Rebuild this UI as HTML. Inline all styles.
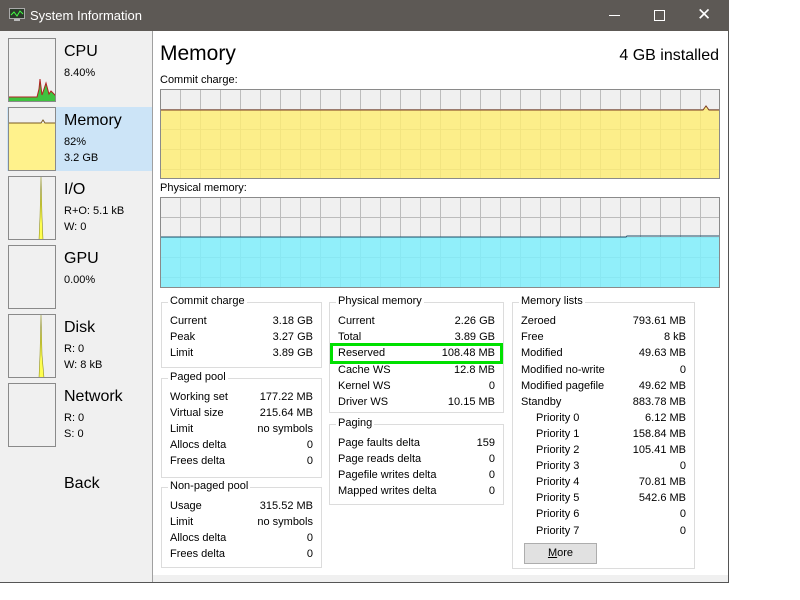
<!DOCTYPE html><html><head><style>
*{margin:0;padding:0;box-sizing:border-box}
body{width:800px;height:600px;background:#fff;position:relative;font-family:"Liberation Sans",sans-serif;color:#000;overflow:hidden}
.a{position:absolute}
#win{left:0;top:0;width:729px;height:583px;border:1px solid #555;border-top:none;background:#f0f0f0}
#title{left:0;top:0;width:729px;height:31px;background:#5d5955;color:#fff;font-size:12px}
#side{left:0;top:31px;width:153px;height:551px;background:#f0f0f0;border-right:1px solid #a0a0a0}
#main{left:153px;top:31px;width:575px;height:544px;background:#fff}
.th{position:absolute;left:8px;width:48px;height:64px;border:1px solid #8a8a8a;background:#f0f0f0;overflow:hidden}
.nm{position:absolute;left:64px;font-size:16px}
.sb{position:absolute;left:64px;font-size:11px;line-height:16px}
.chart{position:absolute;left:160px;width:560px;border:1px solid #8a8a8a;overflow:hidden;
background-color:#f0f0f0;background-image:linear-gradient(#bcbcbc 1px,transparent 1px),linear-gradient(90deg,#bcbcbc 1px,transparent 1px);background-size:20px 20px;background-position:-1px -1px}
.gb{position:absolute;border:1px solid #dcdcdc;font-size:11px}
.gt{position:absolute;top:-8px;left:6px;background:#fff;padding:0 2px;font-size:11px}
.r{position:absolute;left:8px;right:8px;height:16px;line-height:16px;font-size:11px}
.r span{position:absolute;right:0;top:0}
</style></head><body>
<div id="win" class="a"></div>
<div id="title" class="a">
<svg class="a" style="left:9px;top:8px" width="16" height="14"><rect x="0.5" y="0.5" width="15" height="10" fill="#2a3a2a" stroke="#aaa"/><polyline points="2,7 5,4 8,8 11,3 14,6" fill="none" stroke="#4f4" stroke-width="1"/><rect x="5" y="11" width="6" height="2" fill="#bbb"/></svg>
<div class="a" style="left:30px;top:8px;font-size:13px">System Information</div>
<div class="a" style="left:609px;top:15px;width:11px;height:1px;background:#fff"></div>
<div class="a" style="left:654px;top:10px;width:11px;height:11px;border:1px solid #fff"></div>
<div class="a" style="left:697px;top:5px;font-size:17px;color:#fff">✕</div>
</div>
<div id="side" class="a">
<div class="a" style="left:7px;top:76px;width:145px;height:64px;background:#cce4f7"></div>
</div>
<div class="th" style="top:38px"><svg width="48" height="64"><polygon points="0,63 0,58 28,58 30,50 31,40 33,56 35,50 37,44 40,55 42,52 46,56 47,58 47,63" fill="#3fc33f"/><polyline points="0,58 28,58 30,50 31,40 33,56 35,50 37,44 40,55 42,52 46,56 47,58" fill="none" stroke="#b02020"/></svg></div>
<div class="th" style="top:107px"><svg width="48" height="64"><rect x="0" y="15" width="48" height="49" fill="#fff28c"/><polyline points="0,15 32,15 34,12 36,15 48,15" fill="none" stroke="#7a5a20"/></svg></div>
<div class="th" style="top:176px"><svg width="48" height="64"><polygon points="30,63 31,40 32,0 33,40 34,63" fill="#ffff50" stroke="#909020" stroke-width=".6"/><line x1="0" y1="62.5" x2="48" y2="62.5" stroke="#8a8a40"/></svg></div>
<div class="th" style="top:245px"><svg width="48" height="64"><line x1="0" y1="62.5" x2="48" y2="62.5" stroke="#3a9a3a"/></svg></div>
<div class="th" style="top:314px"><svg width="48" height="64"><polygon points="30,63 31,40 32,0 33,40 35,63" fill="#ffff50" stroke="#909020" stroke-width=".6"/><line x1="0" y1="62.5" x2="48" y2="62.5" stroke="#8a8a40"/></svg></div>
<div class="th" style="top:383px"><svg width="48" height="64"><line x1="0" y1="62.5" x2="48" y2="62.5" stroke="#8a8a40"/></svg></div>
<div class="nm" style="top:43px">CPU</div><div class="sb" style="top:65px">8.40%</div>
<div class="nm" style="top:112px">Memory</div><div class="sb" style="top:134px">82%<br>3.2 GB</div>
<div class="nm" style="top:181px">I/O</div><div class="sb" style="top:203px">R+O: 5.1 kB<br>W: 0</div>
<div class="nm" style="top:250px">GPU</div><div class="sb" style="top:272px">0.00%</div>
<div class="nm" style="top:319px">Disk</div><div class="sb" style="top:341px">R: 0<br>W: 8 kB</div>
<div class="nm" style="top:388px">Network</div><div class="sb" style="top:410px">R: 0<br>S: 0</div>
<div class="a" style="left:64px;top:475px;font-size:16px">Back</div>
<div id="main" class="a"></div>
<div class="a" style="left:153px;top:575px;width:575px;height:7px;background:#f0f0f0"></div>
<div class="a" style="left:160px;top:42px;font-size:21px">Memory</div>
<div class="a" style="right:81px;top:47px;font-size:16px">4 GB installed</div>
<div class="a" style="left:160px;top:74px;font-size:11px">Commit charge:</div>
<div class="chart" style="top:89px;height:90px"><svg class="a" style="left:0;top:0" width="560" height="90"><polygon points="0,20 542,20 545,16 548,20 560,20 560,90 0,90" fill="#ffee70" fill-opacity=".8"/><polyline points="0,20 542,20 545,16 548,20 560,20" fill="none" stroke="#7a3a20"/></svg></div>
<div class="a" style="left:160px;top:182px;font-size:11px">Physical memory:</div>
<div class="chart" style="top:197px;height:91px"><svg class="a" style="left:0;top:0" width="560" height="91"><rect x="0" y="39" width="560" height="52" fill="#80eefc" fill-opacity=".85"/><polyline points="0,39 465,39 466,38 560,38" fill="none" stroke="#20506a"/></svg></div>

<div class="gb" style="left:161px;top:302px;width:161px;height:66px"><div class="gt">Commit charge</div>
<div class="r" style="top:10px">Current<span>3.18 GB</span></div><div class="r" style="top:26px">Peak<span>3.27 GB</span></div><div class="r" style="top:42px">Limit<span>3.89 GB</span></div></div>
<div class="gb" style="left:161px;top:378px;width:161px;height:100px"><div class="gt">Paged pool</div>
<div class="r" style="top:10px">Working set<span>177.22 MB</span></div><div class="r" style="top:26px">Virtual size<span>215.64 MB</span></div><div class="r" style="top:42px">Limit<span>no symbols</span></div><div class="r" style="top:58px">Allocs delta<span>0</span></div><div class="r" style="top:74px">Frees delta<span>0</span></div></div>
<div class="gb" style="left:161px;top:487px;width:161px;height:81px"><div class="gt">Non-paged pool</div>
<div class="r" style="top:10px">Usage<span>315.52 MB</span></div><div class="r" style="top:26px">Limit<span>no symbols</span></div><div class="r" style="top:42px">Allocs delta<span>0</span></div><div class="r" style="top:58px">Frees delta<span>0</span></div></div>

<div class="gb" style="left:329px;top:302px;width:175px;height:111px"><div class="gt">Physical memory</div>
<div class="r" style="top:10px">Current<span>2.26 GB</span></div><div class="r" style="top:26px">Total<span>3.89 GB</span></div>
<div class="a" style="left:0;top:40px;width:173px;height:21px;border:3px solid #00e000"></div>
<div class="r" style="top:42px">Reserved<span>108.48 MB</span></div><div class="r" style="top:59px">Cache WS<span>12.8 MB</span></div><div class="r" style="top:75px">Kernel WS<span>0</span></div><div class="r" style="top:91px">Driver WS<span>10.15 MB</span></div></div>
<div class="gb" style="left:329px;top:424px;width:175px;height:81px"><div class="gt">Paging</div>
<div class="r" style="top:10px">Page faults delta<span>159</span></div><div class="r" style="top:26px">Page reads delta<span>0</span></div><div class="r" style="top:42px">Pagefile writes delta<span>0</span></div><div class="r" style="top:58px">Mapped writes delta<span>0</span></div></div>

<div class="gb" style="left:512px;top:302px;width:183px;height:267px"><div class="gt">Memory lists</div>
<div class="r" style="top:10px">Zeroed<span>793.61 MB</span></div><div class="r" style="top:26px">Free<span>8 kB</span></div><div class="r" style="top:42px">Modified<span>49.63 MB</span></div><div class="r" style="top:59px">Modified no-write<span>0</span></div><div class="r" style="top:75px">Modified pagefile<span>49.62 MB</span></div><div class="r" style="top:91px">Standby<span>883.78 MB</span></div>
<div class="r" style="top:107px;left:23px">Priority 0<span>6.12 MB</span></div><div class="r" style="top:123px;left:23px">Priority 1<span>158.84 MB</span></div><div class="r" style="top:139px;left:23px">Priority 2<span>105.41 MB</span></div><div class="r" style="top:155px;left:23px">Priority 3<span>0</span></div><div class="r" style="top:171px;left:23px">Priority 4<span>70.81 MB</span></div><div class="r" style="top:187px;left:23px">Priority 5<span>542.6 MB</span></div><div class="r" style="top:203px;left:23px">Priority 6<span>0</span></div><div class="r" style="top:220px;left:23px">Priority 7<span>0</span></div>
<div class="a" style="left:11px;top:240px;width:73px;height:21px;background:#e1e1e1;border:1px solid #adadad;font-size:11px;text-align:center;line-height:19px"><u>M</u>ore</div></div>
</body></html>
